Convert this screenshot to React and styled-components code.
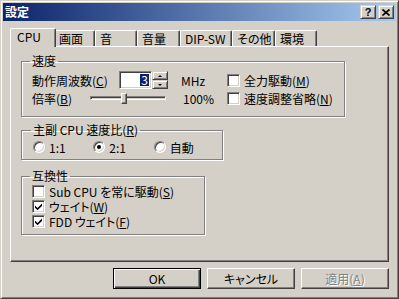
import React from "react";
import styled, { createGlobalStyle } from "styled-components";

const GlobalStyle = createGlobalStyle`
  html, body {
    margin: 0;
    padding: 0;
    background: #d4d0c8;
  }
  body {
    font-family: "Noto Sans CJK JP", "Noto Sans", sans-serif;
    font-size: 12px;
    line-height: 14px;
    color: #000;
    font-feature-settings: "palt";
  }
  u {
    display: inline-block;
    line-height: 13px;
    text-underline-offset: 1px;
  }
`;

const TABS = [
  { label: "CPU", width: 42 },
  { label: "画面", width: 41 },
  { label: "音", width: 42 },
  { label: "音量", width: 43 },
  { label: "DIP-SW", width: 52 },
  { label: "その他", width: 43 },
  { label: "環境", width: 42 },
];

function CheckMark() {
  return (
    <svg width="7" height="7" viewBox="0 0 7 7">
      <polygon points="0,2.5 2.5,5 7,0.5 7,3 2.5,7.2 0,4.7" fill="#000" />
    </svg>
  );
}

function Check({ on, children }) {
  return (
    <CheckItem>
      <CheckBox>{on && <CheckMark />}</CheckBox>
      <ItemText>{children}</ItemText>
    </CheckItem>
  );
}

function Radio({ on, children }) {
  return (
    <RadioItem>
      <RadioDot $on={on} />
      <ItemText>{children}</ItemText>
    </RadioItem>
  );
}

export default function App() {
  return (
    <>
      <GlobalStyle />
      <Window>
        <TitleBar>
          <Title>設定</Title>
          <TitleButton>?</TitleButton>
          <TitleButton $gap={2}>
            <svg width="8" height="7" viewBox="0 0 8 7">
              <path d="M0.5 0.5 L7.5 6.5 M7.5 0.5 L0.5 6.5" stroke="#000" strokeWidth="1.6" />
            </svg>
          </TitleButton>
        </TitleBar>

        <Body>
          <TabStrip>
            {TABS.map((t, i) => (
              <Tab key={t.label} $w={t.width} $active={i === 0}>
                {t.label}
              </Tab>
            ))}
          </TabStrip>

          <Panel>
            <Group $w={324} $mt={0} $pad="3px 8px 9px 10px">
              <Legend>速度</Legend>
              <SpeedGrid>
                <Label $span={2}>
                  動作周波数(<u>C</u>)
                </Label>
                <Spin>
                  <SpinEdit>
                    <Selected>3</Selected>
                  </SpinEdit>
                  <SpinButtons>
                    <SpinButton>
                      <Arrow $up />
                    </SpinButton>
                    <SpinButton>
                      <Arrow />
                    </SpinButton>
                  </SpinButtons>
                </Spin>
                <Unit $pad={13}>MHz</Unit>
                <Check>
                  全力駆動(<u>M</u>)
                </Check>

                <Label>
                  倍率(<u>B</u>)
                </Label>
                <Slider>
                  <Track />
                  <Thumb />
                </Slider>
                <Unit $pad={15}>100%</Unit>
                <Check>
                  速度調整省略(<u>N</u>)
                </Check>
              </SpeedGrid>
            </Group>

            <Group $w={202} $mt={6} $pad="3px 8px 5px 11px">
              <Legend>
                主副 CPU 速度比(<u>R</u>)
              </Legend>
              <RadioRow>
                <Radio>1:1</Radio>
                <Radio on>2:1</Radio>
                <Radio>自動</Radio>
              </RadioRow>
            </Group>

            <Group $w={184} $mt={9} $pad="1px 8px 5px 10px">
              <Legend>互換性</Legend>
              <CheckList>
                <Check>
                  Sub CPU を常に駆動(<u>S</u>)
                </Check>
                <Check on>
                  ウェイト(<u>W</u>)
                </Check>
                <Check on>
                  FDD ウェイト(<u>F</u>)
                </Check>
              </CheckList>
            </Group>
          </Panel>

          <ButtonRow>
            <Button $default>OK</Button>
            <Button>キャンセル</Button>
            <Button disabled>
              適用(<u>A</u>)
            </Button>
          </ButtonRow>
        </Body>
      </Window>
    </>
  );
}

const Window = styled.div`
  width: 399px;
  height: 299px;
  box-sizing: border-box;
  border: 1px solid;
  border-color: #d4d0c8 #404040 #404040 #d4d0c8;
  box-shadow: inset 1px 1px #fff, inset -1px -1px #808080;
  padding: 2px;
  background: #d4d0c8;
  display: flex;
  flex-direction: column;
`;

const TitleBar = styled.div`
  height: 18px;
  flex-shrink: 0;
  display: flex;
  align-items: center;
  padding: 0 2px;
  background: linear-gradient(to right, #0a246a, #a6caf0);
`;

const Title = styled.span`
  flex: 1;
  color: #fff;
  font-weight: bold;
  line-height: 18px;
`;

const TitleButton = styled.div`
  width: 16px;
  height: 14px;
  box-sizing: border-box;
  margin-left: ${(p) => p.$gap || 0}px;
  border: 1px solid;
  border-color: #d4d0c8 #404040 #404040 #d4d0c8;
  box-shadow: inset 1px 1px #fff, inset -1px -1px #808080;
  background: #d4d0c8;
  display: flex;
  align-items: center;
  justify-content: center;
  font-family: "Liberation Sans", sans-serif;
  font-weight: bold;
  font-size: 11px;
  line-height: 12px;
`;

const Body = styled.div`
  flex: 1;
  display: flex;
  flex-direction: column;
  padding: 7px 7px 0 7px;
`;

const TabStrip = styled.div`
  height: 18px;
  display: flex;
  align-items: flex-end;
  padding-left: 2px;
  position: relative;
  z-index: 1;
`;

const Tab = styled.div`
  width: ${(p) => p.$w + (p.$active ? 4 : 0)}px;
  height: ${(p) => (p.$active ? 19 : 16)}px;
  margin: 0 ${(p) => (p.$active ? -2 : 0)}px ${(p) => (p.$active ? -1 : 0)}px;
  box-sizing: border-box;
  flex-shrink: 0;
  border-top: 1px solid #fff;
  border-left: 1px solid #fff;
  border-right: 1px solid #404040;
  border-radius: 2px 2px 0 0;
  box-shadow: inset -1px 0 #808080;
  background: #d4d0c8;
  padding: 1px 0 0 ${(p) => (p.$active ? 6 : 4)}px;
  line-height: 14px;
  white-space: nowrap;
  overflow: hidden;
  position: relative;
  z-index: ${(p) => (p.$active ? 2 : 1)};
`;

const Panel = styled.div`
  height: 216px;
  box-sizing: border-box;
  border: 1px solid;
  border-color: #fff #404040 #404040 #fff;
  box-shadow: inset -1px -1px #808080;
  padding: 7px 10px;
  display: flex;
  flex-direction: column;
  align-items: flex-start;
`;

const Group = styled.fieldset`
  width: ${(p) => p.$w}px;
  box-sizing: border-box;
  min-width: 0;
  margin: ${(p) => p.$mt}px 0 0 0;
  padding: ${(p) => p.$pad};
  border: 1px solid #808080;
  box-shadow: 1px 1px 0 #fff, inset 1px 1px 0 #fff;
`;

const Legend = styled.legend`
  padding: 0 2px;
  margin-left: -2px;
  line-height: 14px;
`;

const SpeedGrid = styled.div`
  display: grid;
  grid-template-columns: 58px 29px 49px 59px auto;
  grid-auto-rows: 18px;
  align-items: center;
`;

const Label = styled.span`
  grid-column: span ${(p) => p.$span || 1};
  white-space: nowrap;
  line-height: 13px;
`;

const Unit = styled.span`
  padding-left: ${(p) => p.$pad}px;
  white-space: nowrap;
  line-height: 13px;
`;

const Spin = styled.div`
  display: flex;
  height: 18px;
`;

const SpinEdit = styled.div`
  width: 33px;
  height: 18px;
  box-sizing: border-box;
  border: 1px solid;
  border-color: #808080 #fff #fff #808080;
  box-shadow: inset 1px 1px #404040, inset -1px -1px #d4d0c8;
  background: #fff;
  display: flex;
  align-items: center;
  justify-content: flex-end;
  padding-right: 2px;
`;

const Selected = styled.span`
  background: #0a246a;
  color: #fff;
  line-height: 12px;
  padding: 0 1px;
`;

const SpinButtons = styled.div`
  display: flex;
  flex-direction: column;
  width: 16px;
`;

const SpinButton = styled.div`
  height: 9px;
  box-sizing: border-box;
  border: 1px solid;
  border-color: #d4d0c8 #404040 #404040 #d4d0c8;
  box-shadow: inset 1px 1px #fff, inset -1px -1px #808080;
  display: flex;
  align-items: center;
  justify-content: center;
`;

const Arrow = styled.span`
  width: 0;
  height: 0;
  border-left: 2px solid transparent;
  border-right: 2px solid transparent;
  ${(p) => (p.$up ? "border-bottom: 2px solid #000;" : "border-top: 2px solid #000;")}
`;

const Slider = styled.div`
  grid-column: span 2;
  width: 78px;
  height: 18px;
  display: flex;
  align-items: center;
  position: relative;
`;

const Track = styled.div`
  width: 76px;
  height: 4px;
  box-sizing: border-box;
  border: 1px solid;
  border-color: #808080 #fff #fff #808080;
  box-shadow: inset 1px 1px #404040;
`;

const Thumb = styled.div`
  position: absolute;
  left: 31px;
  top: 4px;
  width: 6px;
  height: 11px;
  box-sizing: border-box;
  border: 1px solid;
  border-color: #fff #404040 #404040 #fff;
  box-shadow: inset -1px -1px #808080;
  background: #d4d0c8;
`;

const ItemText = styled.span`
  line-height: 13px;
`;

const CheckItem = styled.label`
  display: flex;
  align-items: center;
  gap: 4px;
  white-space: nowrap;
  height: 15px;
`;

const CheckBox = styled.span`
  width: 13px;
  height: 13px;
  flex-shrink: 0;
  box-sizing: border-box;
  border: 1px solid;
  border-color: #808080 #fff #fff #808080;
  box-shadow: inset 1px 1px #404040, inset -1px -1px #d4d0c8;
  background: #fff;
  display: flex;
  align-items: center;
  justify-content: center;
`;

const CheckList = styled.div`
  display: flex;
  flex-direction: column;
`;

const RadioRow = styled.div`
  display: flex;
  height: 14px;
`;

const RadioItem = styled.label`
  width: 62px;
  display: flex;
  align-items: center;
  gap: 4px;
  white-space: nowrap;
`;

const RadioDot = styled.span`
  width: 12px;
  height: 12px;
  flex-shrink: 0;
  box-sizing: border-box;
  border-radius: 50%;
  border: 1px solid;
  border-color: #808080 #fff #fff #808080;
  box-shadow: inset 1px 1px #404040, inset -1px -1px #d4d0c8;
  background: #fff;
  display: flex;
  align-items: center;
  justify-content: center;

  &::after {
    content: "";
    width: 4px;
    height: 4px;
    border-radius: 50%;
    background: ${(p) => (p.$on ? "#000" : "transparent")};
  }
`;

const ButtonRow = styled.div`
  display: flex;
  justify-content: flex-end;
  gap: 6px;
  margin-top: 6px;
`;

const Button = styled.button`
  width: 88px;
  height: 21px;
  box-sizing: border-box;
  padding: 0;
  font-family: inherit;
  font-feature-settings: "palt";
  font-size: 12px;
  line-height: 17px;
  color: #000;
  background: #d4d0c8;
  border: 1px solid;
  border-color: ${(p) => (p.$default ? "#000" : "#fff #404040 #404040 #fff")};
  box-shadow: ${(p) =>
    p.$default
      ? "inset 1px 1px #fff, inset -1px -1px #404040, inset -2px -2px #808080"
      : "inset -1px -1px #808080"};

  &:disabled {
    color: #808080;
    text-shadow: 1px 1px #fff;
  }
`;
